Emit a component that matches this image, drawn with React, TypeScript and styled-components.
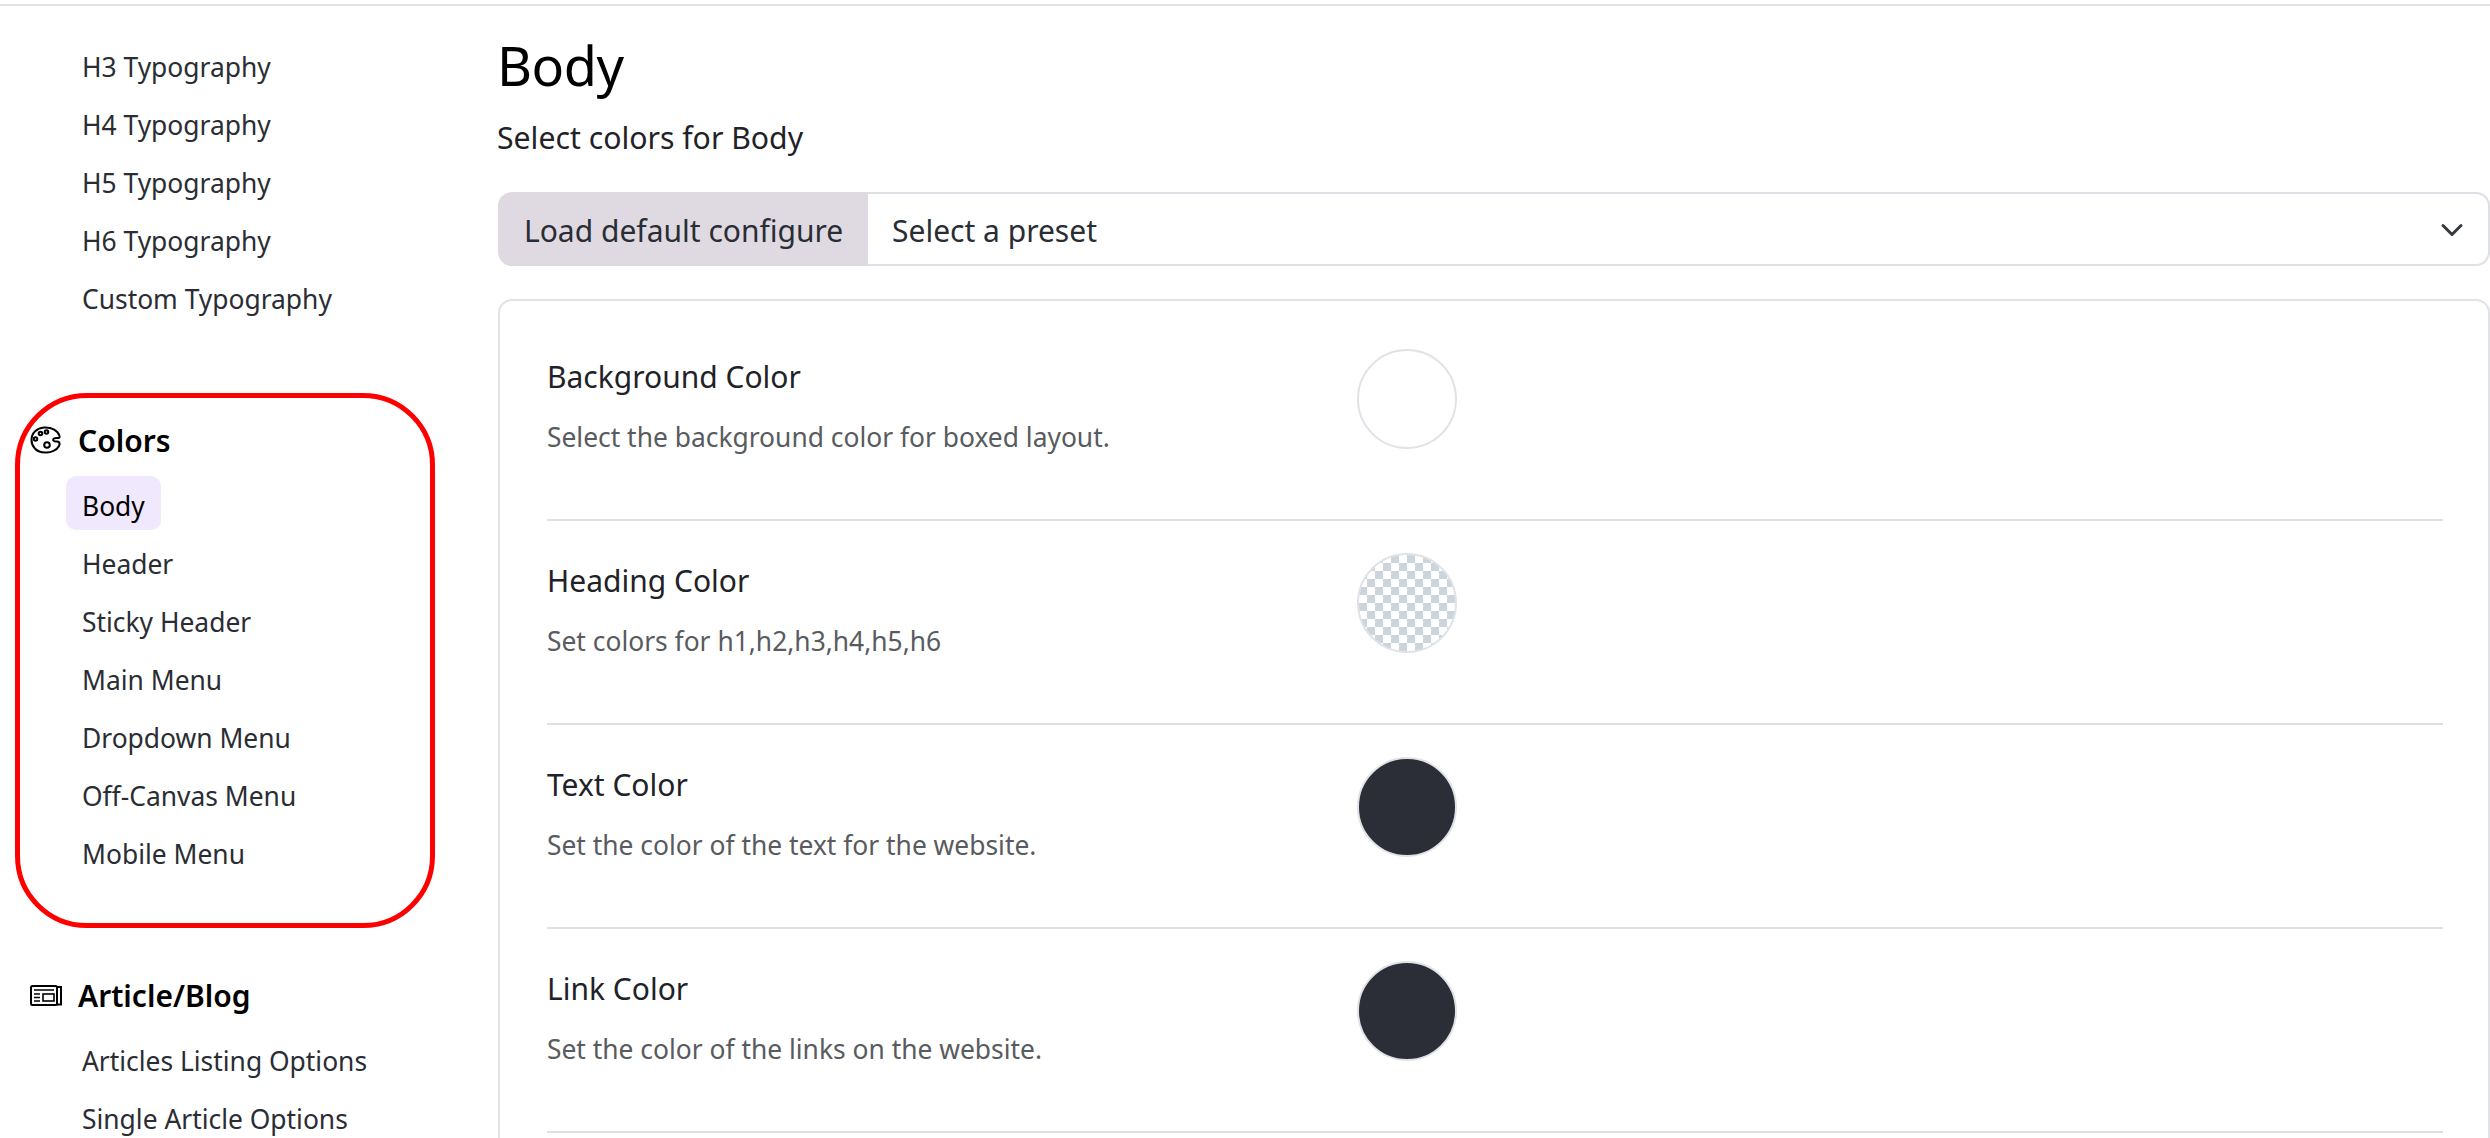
import * as React from "react";
import styled, { createGlobalStyle } from "styled-components";

const GlobalStyle = createGlobalStyle`
  html, body {
    margin: 0;
    padding: 0;
    background: #fff;
    font-family: "Noto Sans", "Open Sans", sans-serif;
    color: #2a2d34;
  }
`;

const Page = styled.div`
  position: relative;
  width: 2490px;
  height: 1138px;
  overflow: hidden;
  box-sizing: border-box;
  padding-top: 4px;
`;

const TopRule = styled.div`
  height: 2px;
  background: #e1e0e6;
`;

const Columns = styled.div`
  display: flex;
`;

const Sidebar = styled.aside`
  width: 498px;
  flex-shrink: 0;
  padding-top: 31px;
  box-sizing: border-box;
`;

const Section = styled.section`
  margin-bottom: 98px;
`;

const SectionTitle = styled.h3`
  display: flex;
  align-items: center;
  gap: 16px;
  height: 38px;
  margin: 0 0 17px 30px;
  font-size: 30px;
  font-weight: 600;
  color: #000;
`;

const NavList = styled.ul`
  list-style: none;
  margin: 0;
  padding: 0 0 0 66px;
  display: flex;
  flex-direction: column;
  gap: 4px;
`;

const NavItem = styled.li<{ $active?: boolean }>`
  align-self: flex-start;
  height: 54px;
  line-height: 60px;
  padding: 0 16px;
  border-radius: 10px;
  font-size: 26.4px;
  white-space: nowrap;
  color: ${({ $active }) => ($active ? "#000" : "#2a2d34")};
  background: ${({ $active }) => ($active ? "#f0e9fd" : "transparent")};
`;

const Highlight = styled.div`
  position: absolute;
  left: 15px;
  top: 393px;
  width: 420px;
  height: 535px;
  box-sizing: border-box;
  border: 5px solid #ff0000;
  border-radius: 72px;
  pointer-events: none;
`;

const Main = styled.main`
  flex: 1;
  min-width: 0;
  padding-top: 26px;
`;

const Title = styled.h1`
  margin: 0 0 20px -1px;
  font-size: 54px;
  letter-spacing: -0.5px;
  line-height: 66px;
  font-weight: 400;
  color: #000;
`;

const Lead = styled.p`
  margin: 0 0 34px -1px;
  font-size: 30.2px;
  line-height: 40px;
  color: #1f2227;
`;

const InputGroup = styled.div`
  display: flex;
  height: 74px;
  margin-bottom: 33px;
  box-sizing: border-box;
`;

const GroupLabel = styled.div`
  width: 370px;
  box-sizing: border-box;
  padding: 2px 0 0 26px;
  display: flex;
  align-items: center;
  background: #dfdae1;
  border-radius: 14px 0 0 14px;
  font-size: 30px;
  white-space: nowrap;
  color: #2a2d34;
`;

const PresetSelect = styled.div`
  flex: 1;
  box-sizing: border-box;
  display: flex;
  align-items: center;
  justify-content: space-between;
  padding: 2px 24px 0 24px;
  border: 2px solid #dfe0e5;
  border-left: 0;
  border-radius: 0 14px 14px 0;
  font-size: 30px;
  color: #2a2d34;

  svg {
    width: 24px;
    height: 24px;
  }
`;

// the card runs on below the fold
const Card = styled.div`
  box-sizing: border-box;
  min-height: 1000px;
  border: 2px solid #e1e2e7;
  border-radius: 14px;
  padding: 16px 45px 0 47px;
`;

const Row = styled.div`
  display: flex;
  box-sizing: border-box;
  height: 204px;
  padding-top: 32px;
  border-bottom: 2px solid #dde0e5;
`;

const RowText = styled.div`
  width: 810px;
  flex-shrink: 0;
`;

const RowTitle = styled.div`
  font-size: 30px;
  line-height: 40px;
  margin-top: 8px;
  color: #1f2227;
`;

const RowDescription = styled.div`
  font-size: 26.4px;
  line-height: 36px;
  margin-top: 22px;
  color: #585b60;
`;

const Swatch = styled.div<{ $color?: string; $checker?: boolean }>`
  width: 100px;
  height: 100px;
  box-sizing: border-box;
  border-radius: 50%;
  border: 2px solid #e1e2e7;
  background-color: ${({ $color }) => $color || "#fff"};
  ${({ $checker }) =>
    $checker &&
    `
    background-image: conic-gradient(#ccd5dc 25%, #fff 0 50%, #ccd5dc 0 75%, #fff 0);
    background-size: 16px 16px;
    background-position: 8px 0;
  `}
`;

const PaletteIcon = () => (
  <svg width="32" height="28" viewBox="0 0 32 28" fill="none" stroke="#000" strokeWidth="2">
    <path d="M14 1.5C22 1 28 5 29.5 10C30.5 13.5 26 11 24 12.5C22 14 24 15.5 26 15.5C29 15 30.5 17 29 20C27 24 21 27 15 26.5C6 26.5 1.5 20 1.5 14C1.5 7 7 2 14 1.5Z" />
    <circle cx="5.5" cy="13" r="1.8" />
    <circle cx="10.5" cy="7.5" r="1.8" />
    <circle cx="16.5" cy="6" r="1.8" />
    <circle cx="17" cy="19" r="2.8" />
  </svg>
);

const NewspaperIcon = () => (
  <svg width="32" height="21" viewBox="0 0 32 21" fill="none" stroke="#000" strokeWidth="2">
    <rect x="1" y="1" width="26" height="19" rx="1.5" />
    <path d="M27 2H31V19.5H27" />
    <path d="M4 5H24M4 9H10M4 12.5H10M4 16H10" strokeWidth="1.6" />
    <rect x="13" y="9" width="11" height="7" strokeWidth="1.6" />
  </svg>
);

const typography = ["H3 Typography", "H4 Typography", "H5 Typography", "H6 Typography", "Custom Typography"];
const colors = ["Body", "Header", "Sticky Header", "Main Menu", "Dropdown Menu", "Off-Canvas Menu", "Mobile Menu"];
const blog = ["Articles Listing Options", "Single Article Options"];

const rows = [
  { title: "Background Color", text: "Select the background color for boxed layout." },
  { title: "Heading Color", text: "Set colors for h1,h2,h3,h4,h5,h6", checker: true },
  { title: "Text Color", text: "Set the color of the text for the website.", color: "#2b2e36" },
  { title: "Link Color", text: "Set the color of the links on the website.", color: "#2b2e36" },
];

const App: React.FC = () => (
  <Page>
    <GlobalStyle />
    <TopRule />
    <Columns>
      <Sidebar>
        <Section>
          <NavList>
            {typography.map((item) => (
              <NavItem key={item}>{item}</NavItem>
            ))}
          </NavList>
        </Section>
        <Section>
          <SectionTitle>
            <PaletteIcon />
            Colors
          </SectionTitle>
          <NavList>
            {colors.map((item) => (
              <NavItem key={item} $active={item === "Body"}>
                {item}
              </NavItem>
            ))}
          </NavList>
        </Section>
        <Section>
          <SectionTitle>
            <NewspaperIcon />
            Article/Blog
          </SectionTitle>
          <NavList>
            {blog.map((item) => (
              <NavItem key={item}>{item}</NavItem>
            ))}
          </NavList>
        </Section>
      </Sidebar>
      <Main>
        <Title>Body</Title>
        <Lead>Select colors for Body</Lead>
        <InputGroup>
          <GroupLabel>Load default configure</GroupLabel>
          <PresetSelect>
            Select a preset
            <svg viewBox="0 0 16 16" fill="none" stroke="#343a40" strokeWidth="2" strokeLinecap="round" strokeLinejoin="round">
              <path d="M2 5l6 6 6-6" />
            </svg>
          </PresetSelect>
        </InputGroup>
        <Card>
          {rows.map((row) => (
            <Row key={row.title}>
              <RowText>
                <RowTitle>{row.title}</RowTitle>
                <RowDescription>{row.text}</RowDescription>
              </RowText>
              <Swatch $color={row.color} $checker={row.checker} />
            </Row>
          ))}
        </Card>
      </Main>
    </Columns>
    <Highlight />
  </Page>
);

export default App;
